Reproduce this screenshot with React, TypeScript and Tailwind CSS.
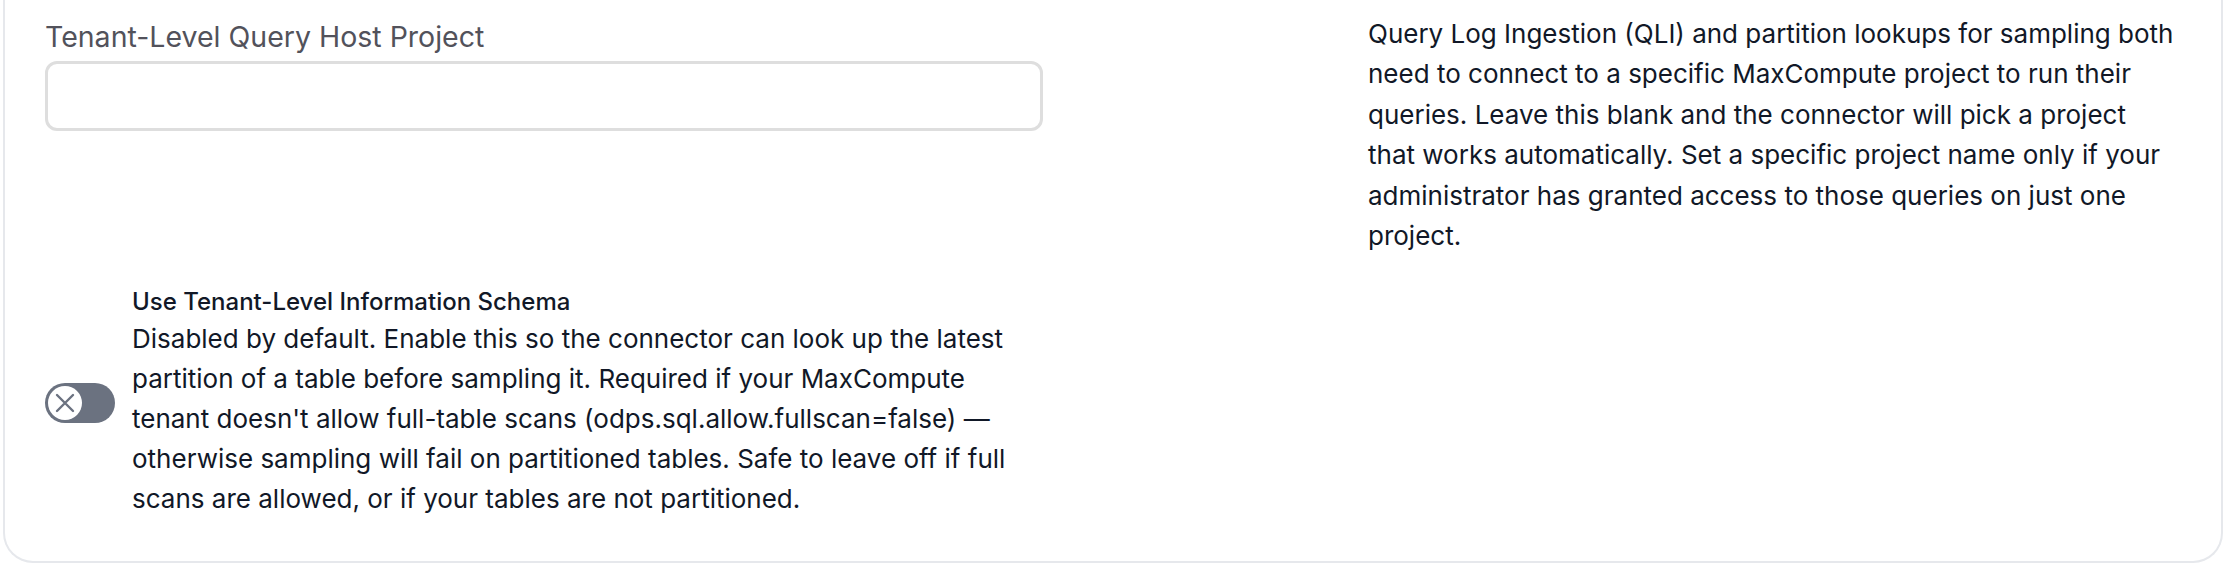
import React from "react";

const HOST_PROJECT_HELP =
  "Query Log Ingestion (QLI) and partition lookups for sampling both need to connect to a specific MaxCompute project to run their queries. Leave this blank and the connector will pick a project that\u00a0works automatically. Set a specific project name only if your administrator has granted access to those queries on just one project.";

const INFO_SCHEMA_HELP =
  "Disabled by default. Enable this so the connector can look up the latest partition of a table before sampling it. Required if your MaxCompute tenant doesn't allow full-table scans (odps.sql.allow.fullscan=false) — otherwise sampling will fail on partitioned tables. Safe to leave off if full scans are allowed, or if your tables are not partitioned.";

function Toggle() {
  return (
    <button
      type="button"
      role="switch"
      aria-checked={false}
      className="relative flex h-[40px] w-[70px] shrink-0 items-center rounded-full bg-[#6b7280] p-[3px]"
    >
      <span className="flex h-[34px] w-[34px] items-center justify-center rounded-full bg-white">
        <svg width="22" height="22" viewBox="0 0 22 22" fill="none">
          <path d="M3 3L19 19M19 3L3 19" stroke="#6b7280" strokeWidth="2.4" strokeLinecap="round" />
        </svg>
      </span>
    </button>
  );
}

export default function App() {
  return (
    <div className="min-h-[572px] bg-white" style={{ fontFamily: "Inter, 'Noto Sans', sans-serif" }}>
      <div className="mx-[3px] rounded-b-[30px] border-x-2 border-b-2 border-[#e6e8ec] px-[40px] pt-[14px] pb-[42px]">
        <div className="flex items-start gap-[323px]">
          <div className="flex w-[1000px] shrink-0 flex-col items-start">
            <label className="mt-[5px] mb-[6px] w-fit text-[28.5px] leading-[36px] text-[#52525b]">
              Tenant-Level Query Host Project
            </label>
            <input
              type="text"
              aria-label="Tenant-Level Query Host Project"
              className="block h-[70px] w-[998px] rounded-[12px] border-[3px] border-[#dedede] bg-white px-4 text-[26px] outline-none"
            />
          </div>
          <p className="w-[830px] text-[26px] leading-[40.4px] text-[#111827]">{HOST_PROJECT_HELP}</p>
        </div>
        <div className="mt-[30px] flex items-center gap-[17px]">
          <Toggle />
          <div className="w-[900px]">
            <div className="text-[24px] font-medium leading-[32px] text-[#111827]">
              Use Tenant-Level Information Schema
            </div>
            <p className="mt-[1px] text-[26px] leading-[40px] text-[#111827]">{INFO_SCHEMA_HELP}</p>
          </div>
        </div>
      </div>
    </div>
  );
}
